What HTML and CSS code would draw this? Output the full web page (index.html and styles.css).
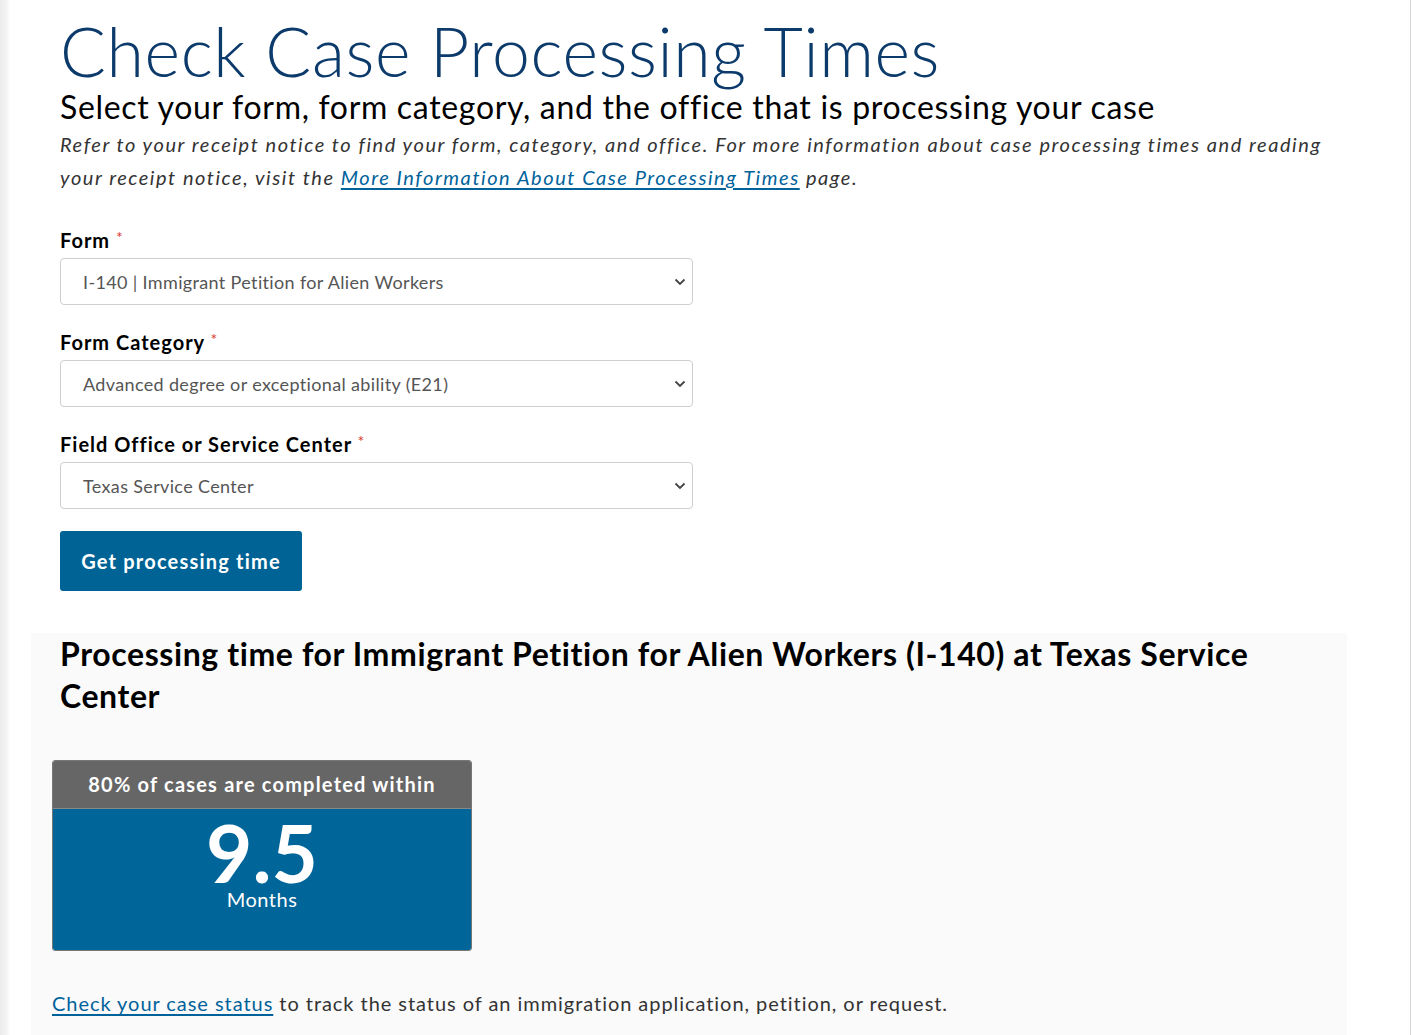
FILE: index.html
```html
<!DOCTYPE html>
<html lang="en">
<head>
<meta charset="utf-8">
<title>Check Case Processing Times</title>
<link rel="stylesheet" href="styles.css">
</head>
<body>
<div class="page">
  <div class="intro">
    <h1 class="title">Check Case Processing Times</h1>
    <h2 class="subtitle">Select your form, form category, and the office that is processing your case</h2>
    <p class="hint">Refer to your receipt notice to find your form, category, and office. For more information about case processing times and reading your receipt notice, visit the <a href="#" class="link">More Information About Case Processing Times</a> page.</p>

    <form class="form">
      <div class="field">
        <label class="label">Form <span class="req">*</span></label>
        <div class="select">
          <span class="select-text">I-140 | Immigrant Petition for Alien Workers</span>
          <svg class="chev" width="12" height="8" viewBox="0 0 12 8"><path d="M1.5 1.5 L6 6 L10.5 1.5" fill="none" stroke="#444" stroke-width="1.8"/></svg>
        </div>
      </div>
      <div class="field">
        <label class="label">Form Category <span class="req">*</span></label>
        <div class="select">
          <span class="select-text">Advanced degree or exceptional ability (E21)</span>
          <svg class="chev" width="12" height="8" viewBox="0 0 12 8"><path d="M1.5 1.5 L6 6 L10.5 1.5" fill="none" stroke="#444" stroke-width="1.8"/></svg>
        </div>
      </div>
      <div class="field">
        <label class="label">Field Office or Service Center <span class="req">*</span></label>
        <div class="select">
          <span class="select-text">Texas Service Center</span>
          <svg class="chev" width="12" height="8" viewBox="0 0 12 8"><path d="M1.5 1.5 L6 6 L10.5 1.5" fill="none" stroke="#444" stroke-width="1.8"/></svg>
        </div>
      </div>
      <button type="button" class="btn">Get processing time</button>
    </form>
  </div>

  <section class="result">
    <h3 class="result-title">Processing time for Immigrant Petition for Alien Workers (I-140) at Texas Service Center</h3>
    <div class="card">
      <div class="card-head">80% of cases are completed within</div>
      <div class="card-body">
        <div class="big">9.5</div>
        <div class="unit">Months</div>
      </div>
    </div>
    <p class="foot"><a href="#" class="link">Check your case status</a> to track the status of an immigration application, petition, or request.</p>
  </section>
</div>
</body>
</html>
```

FILE: styles.css
```css
* { box-sizing: border-box; }
html, body { margin: 0; padding: 0; }
body {
  background: linear-gradient(to right, #ececec 0, #f4f4f4 7px, #fff 10px);
  font-family: "Lato", "Noto Sans", sans-serif;
  color: #1b1b1b;
}
.page {
  margin-left: 10px;
  width: 1401px;
  min-height: 1035px;
  background: #fff;
  border-right: 1px solid #d6d6d6;
  overflow: hidden;
}
.intro { padding: 14px 0 0 50px; }
.title {
  margin: 0;
  font-weight: 300;
  font-size: 68px;
  line-height: 74px;
  color: #0b3a6b;
  letter-spacing: 0.6px;
}
.subtitle {
  margin: 0;
  font-weight: 400;
  font-size: 32px;
  line-height: 38px;
  color: #000;
  letter-spacing: 0.68px;
}
.hint {
  margin: 2px 0 0;
  font-style: italic;
  font-size: 20px;
  line-height: 33px;
  color: #333;
  max-width: 1290px;
  letter-spacing: 1.55px;
}
.link { color: #00629b; text-decoration: underline; text-underline-offset: 3px; }
.form { margin-top: 34px; }
.field { margin-bottom: 25px; }
.field:last-of-type { margin-bottom: 22px; }
.label {
  display: block;
  font-size: 20px;
  font-weight: 700;
  line-height: 24px;
  height: 24px;
  margin-bottom: 6px;
  color: #000;
  letter-spacing: 1px;
}
.req {
  color: #d83933;
  font-size: 16px;
  font-weight: 400;
  line-height: 0;
  position: relative;
  top: -5px;
  margin-left: 0;
}
.select {
  width: 633px;
  height: 47px;
  border: 1px solid #cfcfcf;
  border-radius: 4px;
  display: flex;
  align-items: center;
  justify-content: space-between;
  padding: 0 6px 0 22px;
  background: #fff;
}
.select-text { font-size: 18px; color: #555; letter-spacing: 0.35px; }
.btn {
  display: block;
  margin: 0;
  width: 242px;
  height: 60px;
  border: 0;
  border-radius: 3px;
  background: #006395;
  color: #fff;
  font-family: inherit;
  font-size: 20px;
  font-weight: 700;
  letter-spacing: 1.2px;
  padding: 0;
}
.result {
  margin: 42px 0 0 21px;
  width: 1316px;
  background: #fafafa;
  padding: 0 0 20px 21px;
}
.result-title {
  margin: 0 0 0 8px;
  font-size: 32px;
  font-weight: 700;
  line-height: 42px;
  color: #000;
  max-width: 1230px;
  letter-spacing: 0.6px;
}
.card {
  margin-top: 43px;
  width: 420px;
  border: 1px solid #777;
  border-radius: 3px;
  overflow: hidden;
}
.card-head {
  background: #666;
  color: #fff;
  height: 48px;
  line-height: 47px;
  text-align: center;
  font-size: 20px;
  font-weight: 700;
  border-bottom: 1px solid #888;
  letter-spacing: 1.2px;
}
.card-body {
  background: #006699;
  height: 141px;
  text-align: center;
  color: #fff;
  padding-top: 7px;
}
.big { font-size: 80px; font-weight: 700; line-height: 72px; }
.unit { font-size: 20px; line-height: 22px; letter-spacing: 0.5px; }
.foot {
  margin: 40px 0 0;
  font-size: 20px;
  line-height: 24px;
  color: #333;
  letter-spacing: 0.95px;
}
```
